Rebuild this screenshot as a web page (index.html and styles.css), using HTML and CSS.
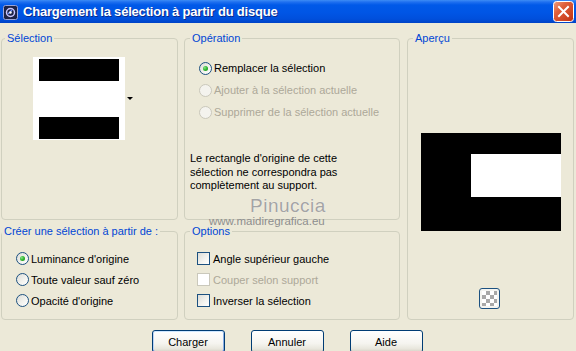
FILE: index.html
```html
<!DOCTYPE html>
<html lang="fr">
<head>
<meta charset="utf-8">
<title>Chargement la sélection à partir du disque</title>
<link rel="stylesheet" href="styles.css">
</head>
<body>
<div class="window">
  <div class="titlebar">
    <span class="app-icon">
      <svg width="15" height="15" viewBox="0 0 15 15">
        <rect x="0.5" y="0.5" width="14" height="14" rx="2" fill="#1d2346" stroke="#9aa3d6"/>
        <circle cx="7.5" cy="7.5" r="4" fill="none" stroke="#c9c6ff" stroke-width="1.5"/>
        <path d="M5 9 L9 5" stroke="#6a8cff" stroke-width="1.5"/>
        <circle cx="7.5" cy="7.5" r="1.2" fill="#ffffff"/>
      </svg>
    </span>
    <span class="title">Chargement la sélection à partir du disque</span>
    <span class="close">
      <svg width="21" height="21" viewBox="0 0 21 21">
        <defs>
          <linearGradient id="cg" x1="0" y1="0" x2="1" y2="1">
            <stop offset="0" stop-color="#f0a080"/>
            <stop offset="0.35" stop-color="#e0603a"/>
            <stop offset="1" stop-color="#c03010"/>
          </linearGradient>
        </defs>
        <rect x="0.5" y="0.5" width="20" height="20" rx="3" fill="url(#cg)" stroke="#ffffff"/>
        <path d="M6 6 L15 15 M15 6 L6 15" stroke="#ffffff" stroke-width="2" stroke-linecap="square"/>
      </svg>
    </span>
  </div>

  <div class="content">
    <div class="groups">
      <fieldset class="group g-sel">
        <legend class="lg-sel">Sélection</legend>
        <div class="sel-inner">
          <div class="thumb">
            <div class="thumb-bar"></div>
            <div class="thumb-bar"></div>
          </div>
          <span class="dd-arrow"></span>
        </div>
      </fieldset>

      <fieldset class="group g-op">
        <legend class="lg-std">Opération</legend>
        <div class="op-inner">
          <div class="row"><span class="radio checked"></span><span class="lbl">Remplacer la sélection</span></div>
          <div class="row disabled"><span class="radio"></span><span class="lbl">Ajouter à la sélection actuelle</span></div>
          <div class="row disabled"><span class="radio"></span><span class="lbl">Supprimer de la sélection actuelle</span></div>
          <p class="note">Le rectangle d'origine de cette<br>sélection ne correspondra pas<br>complètement au support.</p>
        </div>
      </fieldset>

      <fieldset class="group g-prev">
        <legend class="lg-std">Aperçu</legend>
        <div class="prev-inner">
          <div class="preview"><div class="preview-white"></div></div>
          <span class="checker-btn"><span class="checker"></span></span>
        </div>
      </fieldset>

      <fieldset class="group g-create">
        <legend class="lg-create">Créer une sélection à partir de :</legend>
        <div class="create-inner">
          <div class="row r21"><span class="radio checked"></span><span class="lbl">Luminance d'origine</span></div>
          <div class="row r21"><span class="radio"></span><span class="lbl">Toute valeur sauf zéro</span></div>
          <div class="row r21"><span class="radio"></span><span class="lbl">Opacité d'origine</span></div>
        </div>
      </fieldset>

      <fieldset class="group g-opt">
        <legend class="lg-std">Options</legend>
        <div class="opt-inner">
          <div class="row r21"><span class="check"></span><span class="lbl lbl-c">Angle supérieur gauche</span></div>
          <div class="row r21 disabled"><span class="check"></span><span class="lbl lbl-c">Couper selon support</span></div>
          <div class="row r21"><span class="check"></span><span class="lbl lbl-c">Inverser la sélection</span></div>
        </div>
      </fieldset>
    </div>

    <div class="buttons">
      <span class="btn default">Charger</span>
      <span class="btn">Annuler</span>
      <span class="btn">Aide</span>
    </div>
  </div>

  <div class="watermark">
    <span class="wm-name">Pinuccia</span>
    <span class="wm-url">www.maidiregrafica.eu</span>
  </div>
</div>
</body>
</html>
```

FILE: styles.css
```css
* { box-sizing: border-box; }
html, body { margin: 0; padding: 0; }
body {
  width: 576px;
  height: 351px;
  overflow: hidden;
  background: #ECE9D8;
  font-family: "Liberation Sans", Arial, sans-serif;
  font-size: 11px;
  color: #000;
}
.window { position: relative; height: 351px; }

.titlebar {
  height: 23px;
  display: flex;
  align-items: center;
  padding: 0 2px 0 2px;
  background: linear-gradient(to bottom, #3d8df5 0, #1f70f0 2px, #0059e8 5px, #0055e5 13px, #004fdc 19px, #0043c6 23px);
}
.app-icon { width: 15px; height: 15px; display: flex; margin: 1px 5px 0 1px; }
.title {
  flex: 1;
  color: #fff;
  font-weight: bold;
  font-size: 13px;
  letter-spacing: -0.2px;
  text-shadow: 1px 1px 0 #0a2a8a;
}
.close { width: 21px; height: 21px; display: flex; }

.content { padding: 9px 3px 0 1px; }
.groups {
  display: grid;
  grid-template-columns: 177px 216px 168px;
  grid-template-rows: 188px 95px;
  column-gap: 6px;
  row-gap: 5px;
}
.group {
  margin: 0;
  padding: 0;
  min-width: 0;
  border: 1px solid #D0D0BF;
  border-radius: 4px;
}
.group legend {
  padding: 0 2px;
  line-height: 13px;
  color: #0046D5;
}
.lg-sel { margin-left: 3px; }
.lg-std { margin-left: 5px; }
.lg-create { margin-left: 0; }

.g-sel { grid-column: 1; grid-row: 1; }
.g-op { grid-column: 2; grid-row: 1; }
.g-prev { grid-column: 3; grid-row: 1 / span 2; margin-left: 1px; }
.g-create { grid-column: 1; grid-row: 2; }
.g-opt { grid-column: 2; grid-row: 2; }

.sel-inner { display: flex; align-items: center; padding: 12px 0 0 31px; }
.thumb {
  width: 92px;
  height: 83px;
  background: #fff;
  padding: 2px 6px 1px;
  display: flex;
  flex-direction: column;
  justify-content: space-between;
}
.thumb-bar { height: 22px; background: #000; }
.dd-arrow {
  width: 0; height: 0;
  margin-left: 2px;
  border-left: 3px solid transparent;
  border-right: 3px solid transparent;
  border-top: 3px solid #000;
}

.row { height: 22px; display: flex; align-items: center; }
.r21 { height: 21px; }
.lbl { margin-left: 2px; }
.lbl-c { margin-left: 3px; }
.disabled .lbl { color: #ACA899; }

.radio {
  width: 13px; height: 13px;
  border-radius: 50%;
  border: 1px solid #1C5180;
  background: linear-gradient(135deg, #DCDCD7 0%, #F4F4F0 60%, #FFFFFF 100%);
  display: flex; align-items: center; justify-content: center;
  flex: none;
}
.radio.checked::after {
  content: "";
  width: 5px; height: 5px; border-radius: 50%;
  background: radial-gradient(circle at 35% 35%, #8AE28A 0, #2DB52D 50%, #1A8A1A 100%);
}
.disabled .radio { border-color: #CAC8BB; background: #F4F3EE; }

.check {
  width: 13px; height: 13px;
  border: 1px solid #1C5180;
  background: linear-gradient(135deg, #DCDCD7 0%, #F4F4F0 60%, #FFFFFF 100%);
  flex: none;
}
.disabled .check { border-color: #CAC8BB; background: #fff; }

.op-inner { padding: 12px 0 0 14px; }
.note { margin: 29px 0 0 -9px; line-height: 13.5px; }

.prev-inner { padding: 88px 0 0 13px; }
.preview {
  width: 140px; height: 98px;
  background: #000;
  padding-top: 21px;
  display: flex;
  justify-content: flex-end;
  align-items: flex-start;
}
.preview-white { width: 90px; height: 43px; background: #fff; }
.checker-btn {
  display: flex; align-items: center; justify-content: center;
  width: 21px; height: 21px;
  margin: 57px 0 0 58px;
  border: 1px solid #1C5180;
  border-radius: 3px;
  background: #F4F4F0;
}
.checker {
  width: 15px; height: 15px;
  background-color: #fff;
  background-image: conic-gradient(#A8A8A8 25%, #fff 0 50%, #A8A8A8 0 75%, #fff 0);
  background-size: 8px 8px;
}

.create-inner { padding: 10px 0 0 14px; }
.opt-inner { padding: 10px 0 0 12px; }

.buttons {
  display: flex;
  justify-content: center;
  gap: 26px;
  margin-top: 10px;
}
.btn {
  width: 73px; height: 23px;
  display: flex; align-items: center; justify-content: center;
  border: 1px solid #003C74;
  border-radius: 3px;
  background: linear-gradient(to bottom, #FFFFFF 0%, #F5F4EF 60%, #E8E6DC 85%, #D6D0C5 100%);
}
.btn.default {
  box-shadow: inset 0 1px 0 #CEE7FF, inset 0 -1px 0 #6982EE, inset 1px 0 0 #BCD4F6, inset -1px 0 0 #89ADE4;
}

.watermark { position: absolute; left: 0; top: 0; }
.wm-name {
  position: absolute; left: 250px; top: 195px;
  font-size: 19px; letter-spacing: 0.5px;
  color: #A4A4A4;
  text-shadow: 0 0 1px #fff;
  white-space: nowrap;
}
.wm-url {
  position: absolute; left: 209px; top: 215px;
  font-size: 11.5px;
  color: #8E8E8E;
  white-space: nowrap;
}
```
